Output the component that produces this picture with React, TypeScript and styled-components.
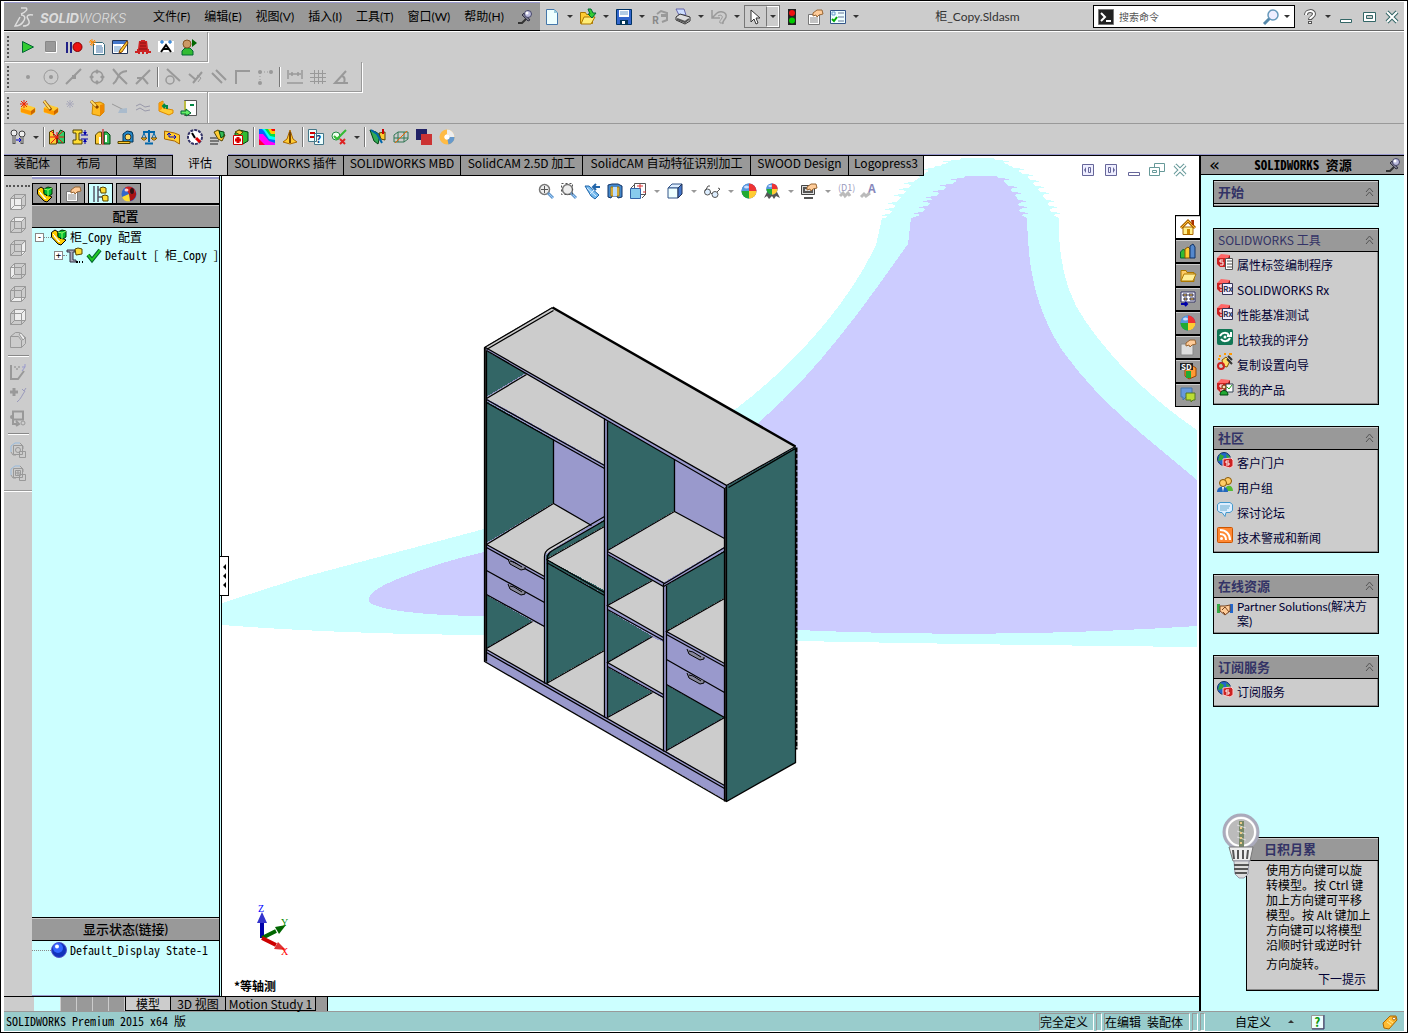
import React from "react";
import styled, { createGlobalStyle, css } from "styled-components";

const color = {
  face: "#cccccc",
  bar: "#999999",
  mint: "#ccffff",
  lilac: "#ccccff",
  slate: "#9999cc",
  teal: "#336666",
  status: "#99cccc",
  navy: "#333366",
};

const sans = `"Noto Sans CJK SC", "Open Sans", sans-serif`;
const humanist = `Lato, "Noto Sans CJK SC", sans-serif`;
const mono = `"Noto Sans Mono CJK SC", "Liberation Mono", "Noto Sans CJK SC", monospace`;

const GlobalStyle = createGlobalStyle`
  * { box-sizing: border-box; }
  body { margin: 0; background: #fff; font: 12px/16px ${sans}; color: #000; }
  button, input { font: inherit; color: inherit; margin: 0; }
  svg { display: block; flex: none; }
`;

/* ---------- icons ---------- */

const P = (d: string, fill = "none", stroke = "none", w = 1) => (
  <path d={d} fill={fill} stroke={stroke} strokeWidth={w} />
);

const assembly = (
  <>
    {P("M.5 3.500L4 1l3 2v4l3 3 1-1 4 2-5 5-3-1L.5 8z", "#fc0", "#000")}
    {P("M2 5l7 8M3 7l5 6", "none", "#fff")}
    {P("M7 3l4-2 4 1v6l-3 2-5-2z", "#0b3", "#030")}
    {P("M7 3l4 1 4-2M11 4v6", "none", "#9f6")}
  </>
);

const block = (
  <>
    {P("M1 8l4-3 10 3v4l-4 3-10-3z", "#fc3", "#fc3")}
    {P("M1 8l10 3v4l-10-3z", "#f90")}
    {P("M11 11l4-3v4l-4 3z", "#c60")}
  </>
);

const ball = (
  <>
    <circle cx="8" cy="8" r="7.500" fill="#36c" />
    {P("M8 8L8 .5A7.500 7.500 0 0 0 .5 8z", "#59d")}
    {P("M8 8L.5 8A7.500 7.500 0 0 0 8 15.500z", "#2a3")}
    {P("M8 8V15.500A7.500 7.500 0 0 0 15.500 8z", "#fc3")}
    {P("M8 8L15.500 8A7.500 7.500 0 0 0 8 .5z", "#e33")}
    <ellipse cx="5.500" cy="4" rx="2.500" ry="1.500" fill="#cdf" />
  </>
);

const darkBall = (
  <>
    <circle cx="8" cy="8" r="7.500" fill="#36c" />
    {P("M8 8L4 1.500A7.500 7.500 0 0 1 15 6z", "#c22")}
    {P("M8 8L15 6A7.500 7.500 0 0 1 9 15z", "#a11")}
    {P("M8 8L9 15.500A7.500 7.500 0 0 1 1 11z", "#fd3")}
    <ellipse cx="11" cy="5" rx="2" ry="3" fill="#311" />
    <ellipse cx="5.500" cy="4" rx="2" ry="1.500" fill="#fcc" />
  </>
);

const redBox = (
  <>
    {P("M0 4l4-4 9 1-2 4z", "#f66")}
    {P("M0 4h11v9l-8 0-3-3z", "#c22")}
    {P("M11 4l2-3v10l-2 2z", "#911")}
    {P("M6 6H3v2h3v3H3", "none", "#fff")}
  </>
);

const globeBox = (
  <>
    <circle cx="7" cy="7" r="6.500" fill="#26c" stroke="#136" />
    {P("M3 2l4 2-2 4-4 1zM9 2l4 3-3 2z", "#3a3")}
    {P("M6 7l8-1 2 2v6l-3 2-7-2z", "#c22", "#fcc")}
    {P("M12 9H9v2h3v2H9", "none", "#fff")}
  </>
);

const lens = (extra: React.ReactNode) => (
  <>
    <circle cx="6.500" cy="6.500" r="5" fill="#eee" stroke="#777" strokeWidth="1.500" />
    {P("M10 10l5 5", "none", "#69c", 3)}
    {P("M11 11l4 4", "none", "#9cf")}
    {extra}
  </>
);

const hand = P("M6 4l4-3 5 0 1 4-4 1-2 2-1-2-3 1z", "#fc9", "#963");
const sheet = (
  <>
    {P("M1.500 5.500h11v10h-11z", "#fff", "#777")}
    {P("M3 9h8M3 11h8M3 13h8", "none", "#888")}
  </>
);

const wire = (front: React.ReactNode) => (
  <>
    {front}
    {P("M.5 4.500h11v11h-11zM4.500.5h11v11h-11zM.5 4.500l4-4M11.500 4.500l4-4M11.500 15.500l4-4M.5 15.500l4-4", "none", "#999")}
  </>
);

const stack = (inner: React.ReactNode) => (
  <>
    {P("M1 10V4l4-3h5", "none", "#9bd")}
    {P("M1 10l2 3h3M10 1l3 3v3", "none", "#999")}
    {P("M3.500 3.500h9v9h-9zM9.500 9.500h6v6h-6z", "none", "#999")}
    {inner}
  </>
);

const glyphs: Record<string, React.ReactNode> = {
  play: P("M2.500 2.500v11l11-5.500z", "#3c3", "#063"),
  stop: <>{P("M2.500 2.500h11v11h-11z", "#aaa", "#fff")}{P("M2.500 2.500h10v10h-10z", "#999", "#888")}</>,
  record: <>{P("M0 3h2v11H0zM4 3h2v11H4z", "#228")}<circle cx="11.500" cy="8" r="4.500" fill="#e11" stroke="#800" /></>,
  newMacro: <>{P("M4.500 3.500h9l2 2v10h-11z", "#fff", "#367")}{P("M7 7h6M7 9h7M7 11h7M7 13h7", "none", "#47a")}{P("M3 0v7M0 3h7M1 1l5 5M6 1L1 6", "none", "#f80")}</>,
  editMacro: <>{P("M.5 1.500h15v13H.5z", "#fff", "#235")}{P("M1 2h14v3H1z", "#47c")}{P("M2 8h7M2 10h7M2 12h6", "none", "#69c")}{P("M15 2l-7 9-1 3 3-1 6-9z", "#fc3", "#840")}</>,
  stamp: <>{P("M6 1h4v1h2l1 8h1v2h2v2h-3v1h-2v-2H9v2H7v-2H5v2H3v-1H0v-2h2v-2h1l1-8h2z", "#c22")}{P("M5 4h6M5 7h6M4 10h8", "none", "#811")}</>,
  letterA: <>{P("M0 2h16v11H0z", "#fff")}{P("M3 13l5-7 5 7M5 10h6", "none", "#000", 2)}{P("M2 3h4M4 1v4M10 3h4M12 1v4", "none", "#06c")}</>,
  person: <>{P("M1 16v-4l3-3h5l3 3v4z", "#3b3", "#063")}<circle cx="6" cy="5" r="4" fill="#c96" stroke="#852" />{P("M11 0v8l5-4z", "#060")}</>,
  point: <circle cx="8" cy="8" r="2" fill="#999" />,
  circleCenter: <><circle cx="8" cy="8" r="7" fill="none" stroke="#999" /><circle cx="8" cy="8" r="2" fill="#999" /></>,
  lineMid: <>{P("M0 15L15 0", "none", "#999", 2)}{P("M6 6h4v4H6z", "#999")}</>,
  quadrant: <><circle cx="8" cy="8" r="6" fill="none" stroke="#999" strokeWidth="1.500" />{P("M8 0l2 3-2 2-2-2zM8 16l2-3-2-2-2 2zM0 8l3-2 2 2-2 2zM16 8l-3-2-2 2 2 2z", "#999")}</>,
  cross: <>{P("M1 0l5 6 9 9", "none", "#999", 2)}{P("M1 15C8 10 4 3 15 2", "none", "#999", 2)}</>,
  nearest: <>{P("M1 15L15 1", "none", "#999", 2)}{P("M2 9h6l5 6", "none", "#999", 2)}</>,
  tangent: <><circle cx="5" cy="11" r="4" fill="none" stroke="#999" strokeWidth="1.500" />{P("M2 0l13 12", "none", "#999", 2)}</>,
  perp: <>{P("M5 14L14 3M1 5l7 6", "none", "#999", 2)}{P("M9 6l4 3-3 4", "none", "#999")}</>,
  parallel: P("M1 4l10 10M5 1l10 10", "none", "#999", 2),
  corner: P("M2 15V2h14", "none", "#999", 2),
  dottedCorner: <><path d="M3 14V3h12" fill="none" stroke="#999" strokeDasharray="1 2" /><circle cx="3" cy="3" r="2" fill="#999" /><circle cx="14" cy="3" r="2" fill="#999" /><circle cx="3" cy="14" r="2" fill="#999" /></>,
  dimension: P("M1 1v9M15 1v9M2 5h12M5 3v4M11 3v4M0 14h16", "none", "#999", 1.5),
  mesh: P("M0 4.500h16M0 8.500h16M0 12.500h16M4.500 1v14M8.500 1v14M12.500 1v14", "none", "#999"),
  angle: P("M13 2L2 14h13M9 7c3 1 3 4 2 7", "none", "#999", 2),
  newPart: <>{block}{P("M4 0v8M0 4h8M1 1l6 6M7 1L1 7", "none", "#e20")}</>,
  editPart: <>{block}{P("M1 1l7 9", "none", "#840", 3)}{P("M1 1l6 8", "none", "#fd6", 2)}</>,
  sparkle: P("M4 0v8M0 4h8M1 1l6 6M7 1L1 7", "none", "#aab"),
  foldPart: <>{P("M4 3l7-1 4 2v8l-4 4-8-2z", "#fb2", "#c80")}{P("M11 5l4-1v8l-4 4z", "#e80")}{P("M2 1l7 7", "none", "#840", 3)}{P("M2 1l5 5", "none", "#fd6", 2)}</>,
  ghostLine: <>{P("M0 4l12 6", "none", "#999")}{P("M8 9l7-1v5H6z", "#abc")}</>,
  ghostPair: <>{P("M1 6l4-2 5 3 5-1M1 10l4-2 5 3 5-1", "none", "#99a")}</>,
  bracket: <>{P("M1 3l4-2v7l10 2v3l-4 2-10-4z", "#fc3", "#d80")}{P("M1 4v7l3-2V2z", "#f90")}{P("M9 9V6H6M7 4L5 6l2 2", "none", "#084", 2)}</>,
  exitSheet: <>{P("M3.500.5h12v15h-12z", "#fff", "#555")}{P("M3 1h2v14H3z", "#bb4")}{P("M9 4h4v2H9z", "#084")}{P("M0 11h5V9l5 4-5 3v-2H0z", "#6e6", "#063")}</>,
  bolts: <><circle cx="4" cy="4" r="3" fill="#eee" stroke="#444" /><circle cx="12" cy="5" r="3" fill="#eee" stroke="#444" />{P("M4 7v8M12 8v7", "none", "#555", 3)}{P("M4 7v7M12 8v6", "none", "#ccc")}{P("M6 11h5M9 9l2 2-2 2", "none", "#00c")}</>,
  interference: <>{P("M.5 3l4-2v5l3 3v6h-7z", "#fc3", "#540")}{P("M15.500 3l-4-2-3 5v8h7z", "#3c6", "#041")}{P("M2 2l12 12M14 2L2 14M8 3v11M1 8h14", "none", "#e11")}</>,
  clearance: <>{P("M1 1h9v3H7v7h3v4H1v-4h3V4H1z", "#fd3", "#540")}{P("M9 6h7M9 10h7M13 1v5M13 15v-5", "none", "#00a")}{P("M11 3h4l-2 3zM11 13h4l-2-3z", "#00a")}</>,
  holeAlign: <>{P("M.5 6l3-3h3v12h-6z", "#fc3", "#540")}{P("M9 3h3l3 3v9H9z", "#3b5", "#041")}{P("M8 0v16", "none", "#c00")}{P("M4 8h2v7H4zM10 6h2v7h-2z", "#fff")}</>,
  measure: <>{P("M5 5l4-3 5 1 1 3v7H5z", "#28c", "#035")}<circle cx="10" cy="8" r="3" fill="#fd6" stroke="#333" />{P("M0 12.500h12v2H0z", "#fc3", "#540")}</>,
  scales: <>{P("M8 1v12M2 3h12M4 14.500h8", "none", "#06a", 2)}{P("M3 4l-2 5h4zM13 4l-2 5h4z", "none", "#06a")}{P("M0 9h6l-2 2H2zM10 9h6l-2 2h-2z", "#fc3", "#850")}</>,
  section: <>{P("M.5 2l10 2 5 2v9l-5-3-10-2z", "#fc3", "#a60")}{P("M5 4v4h7M10 6l2 2-2 2M3 6l2-2 2 2", "none", "#00c")}</>,
  gauge: <><circle cx="8" cy="8" r="7" fill="#fff" stroke="#336" strokeWidth="2" strokeDasharray="3 1" />{P("M9 9l4 4", "none", "#d00", 3)}{P("M8 9L5 4", "none", "#000", 2)}</>,
  assemblyStats: <>{P("M4 3l4-2 7 5-3 6-4-2z", "#fc3", "#540")}{P("M9 2l5 1v4l-3 2z", "#3b5", "#041")}{P("M0 9h7M0 12h9M0 15h8", "none", "#777", 2)}</>,
  assemblyCare: <>{P("M2 4l4-3 9 2v9l-5 3-8-3z", "#3b3", "#041")}{P("M2 3l4-2 4 2-3 3z", "#fc3", "#540")}{P("M.5 6.500h9v9h-9z", "#fff", "#c00")}{P("M5 8v6M2 11h6", "none", "#d00", 3)}</>,
  rainbow: <>{P("M0 0h16v16H0z", "#f0f")}{P("M0 0h16v14L10 12 4 5H0z", "#06f")}{P("M3 0h13v11l-6-1L5 2z", "#0ff")}{P("M6 0h10v8l-5-1z", "#0d4")}{P("M9 0h7v5l-4 0z", "#fc0")}{P("M12 0h4v2h-3z", "#f00")}{P("M0 10l6 6H0z", "#f03")}</>,
  draft: <>{P("M8 1l3 9 4 3-7 2-7-2 4-3z", "#fc3", "#a60")}{P("M8 3v11", "none", "#740", 2)}</>,
  compareDocs: <>{P("M.5.5h8v12h-8zM6.500 4.500h9v11h-9z", "#eff", "#478")}{P("M2 4h5M2 8h4", "none", "#c00", 2)}<text x="8" y="14" fontSize="10" fontWeight="700" fill="#048">?</text></>,
  checkActive: <><circle cx="5" cy="7" r="4" fill="#efe" stroke="#284" />{P("M3 7l3 3 9-9", "none", "#3b3", 2)}{P("M9 10l5 5M14 10l-5 5", "none", "#d22", 2)}</>,
  costing: <>{P("M0 1l6 2 4 3-2 9-4-3z", "#3a5", "#041")}{P("M9 4l6-1v8l-4-1z", "#fc3", "#540")}{P("M1 1l6 4 5 9", "none", "#06a", 2)}{P("M13 0v5", "none", "#c00", 2)}</>,
  cage: <>{P("M1 6l4-3 10 0v7l-4 3H1zM5 3v10M11 3v10M1 9h14", "none", "#375")}{P("M2 14L14 2", "none", "#e60")}</>,
  squares: <>{P("M0 0h11v11H0z", "#226")}{P("M5 5h11v11H5z", "#c33")}</>,
  donut: <><circle cx="8" cy="8" r="5" fill="#fff" stroke="#fb4" strokeWidth="5" />{P("M8 3A5 5 0 0 1 13 8", "none", "#eee", 5)}{P("M13 8A5 5 0 0 1 9 13", "none", "#69c", 5)}<circle cx="8" cy="8" r="2.500" fill="#fff" /></>,
  pin: <>{P("M0 14h4l4-4", "none", "#333", 2)}{P("M4 6l6 6 2-1-6-7z", "#778", "#334")}<circle cx="10" cy="5" r="3.500" fill="#bbd" stroke="#446" /><circle cx="9" cy="4" r="1.500" fill="#fff" /></>,
  newDoc: <>{P("M2.500.5h8l3 3v12h-11z", "#eff", "#47a")}{P("M10 0v4h4z", "#9cd")}</>,
  open: <>{P("M.5 3.500h5l1 2h6v9H.5z", "#fc3", "#a70")}{P("M4 8h11l-4 7H1z", "#fe7", "#a70")}{P("M8 0h3l2 4h3l-4 5-4-4h2z", "#3c3", "#063")}</>,
  save: <>{P("M.5.5h15v15H.5z", "#36c", "#036")}{P("M3 1h10v7H3z", "#fff")}{P("M4 3h8M4 5h8", "none", "#69c")}{P("M4 11h8v5H4z", "#035")}{P("M6 12h3v3H6z", "#fff")}</>,
  rebuild: <>{P("M5 5l4-3 6 2v7l-5 2", "none", "#999", 2)}{P("M9 5h6v3H9z", "#999")}<text x="0" y="15" fontSize="10" fontWeight="700" fill="#888">R</text></>,
  print: <>{P("M1 0h8l2 6H4z", "#cdf", "#66a")}{P("M1 8l4-3 10 3v4l-5 3-9-4z", "#ddd", "#333")}{P("M2 10l8 3 4-3", "none", "#555", 2)}</>,
  undo: <>{P("M1 1v8h8M1 9l5-5", "none", "#999", 1.5)}{P("M6 4c5-3 10 0 9 4-1 3-4 4-3 7", "none", "#999", 1.5)}{P("M7 7c3-2 5 0 4 2-1 2-3 3-2 5h3", "none", "#999")}</>,
  pointer: P("M3 1v12l3-3 2 5 2-1-2-5h4z", "#fff", "#333"),
  traffic: <>{P("M4 0h8v16H4z", "#222")}<circle cx="8" cy="4" r="3" fill="#e11" /><circle cx="8" cy="11.500" r="3" fill="#0c0" /></>,
  props: <>{sheet}{hand}</>,
  options: <>{P("M.5 1.500h15v13H.5z", "#eff", "#358")}{P("M8 4h6M8 8h6M8 12h6", "none", "#679")}{P("M2 3h3v3H2z", "none", "#69c")}{P("M2 10l2 2 3-4", "none", "#0a0", 2)}</>,
  help: <>{P("M4 6c0-5 8-5 8-1 0 3-4 3-4 6M8 12v3", "none", "#555", 4)}{P("M4 6c0-5 8-5 8-1 0 3-4 3-4 5M8 13v1", "none", "#fff", 2)}</>,
  min: P("M2.500 10.500h11v3h-11z", "#fff", "#366"),
  max: <>{P("M2.500 3.500h12v9h-12z", "#fff", "#366")}{P("M5.500 6.500h6v3h-6z", "#ccc", "#366")}</>,
  close: <>{P("M3 3l10 10M13 3L3 13", "none", "#366", 4)}{P("M3 3l10 10M13 3L3 13", "none", "#fff", 2)}</>,
  restore: <>{P("M5.500 1.500h10v8h-10z", "#fff", "#699")}{P("M.5 5.500h10v8H.5z", "#fff", "#699")}{P("M3.500 8.500h4v2h-4z", "none", "#699")}</>,
  closeDoc: <>{P("M3 3l10 10M13 3L3 13", "none", "#699", 4)}{P("M3 3l10 10M13 3L3 13", "none", "#fff", 2)}</>,
  minDoc: P("M2.500 10.500h11v3h-11z", "#fff", "#669"),
  paneLeft: <>{P("M2.500 2.500h11v11h-11z", "#eef", "#669")}{P("M8.500 5.500h2v5h-2z", "none", "#669")}{P("M6 5v6L4 8z", "#669")}</>,
  paneRight: <>{P("M2.500 2.500h11v11h-11z", "#eef", "#669")}{P("M5.500 5.500h2v5h-2z", "none", "#669")}{P("M10 5v6l2-3z", "#669")}</>,
  command: <>{P("M.5.5h15v15H.5z", "#222", "#777")}{P("M3 4l4 4-4 4M8 12h5", "none", "#fff", 2)}</>,
  search: <>{P("M1 15l6-6", "none", "#58a", 3)}<circle cx="10" cy="6" r="5" fill="#eef" stroke="#69b" strokeWidth="1.500" /></>,
  zoomFit: lens(P("M6.500 3v7M3 6.500h7", "none", "#555")),
  zoomArea: lens(<path d="M.5.5h11v11H.5z" fill="none" stroke="#555" strokeDasharray="2 2" />),
  prevView: <>{P("M1 3l4 0 10 9-4 4-4-3z", "#7be", "#26a")}{P("M3 5l9 8M6 11l4-4", "none", "#def")}{P("M9 4h7M12 1L9 4l3 3", "none", "#26a", 2)}</>,
  sectionView: <>{P("M1 2l4-1 6 0 4 2v11l-4 1-1-2H5l-1 2-3-1z", "#48c", "#136")}{P("M4 4h2v9H4zM10 4h2v9h-2z", "#fd6", "#a70")}{P("M6 4h4v9H6z", "#bdf")}</>,
  orient: <>{P("M4.500.5h11v11h-11zM1 5l4-4M12 15l4-4", "#fff", "#555")}{P("M.5 5.500h10v10H.5z", "#8ce", "#36a")}{P("M10 1v5M7 3h6M13 9h3", "none", "#d33")}</>,
  shaded: <>{P("M1 5l4-4h10l-4 4z", "#def", "#358")}{P("M1 5h10v10H1z", "#eff", "#358")}{P("M11 5l4-4v10l-4 4z", "#47c", "#235")}</>,
  glasses: <><circle cx="3.500" cy="9" r="3" fill="#def" stroke="#555" /><circle cx="11" cy="11.500" r="3" fill="#def" stroke="#555" />{P("M1 8L4 3h2M13 9l3-3-2-1M6 9l2 2", "none", "#555")}</>,
  ball,
  darkBall,
  scene: <>{P("M0 15l3-6h10l3 6-4-2-2 3-2-3-3 3-2-3z", "#555")}<g transform="translate(2 0) scale(.75)">{ball}</g></>,
  display: <>{P("M.5 2.500h13v9H.5z", "#ddd", "#444")}{P("M3 5h8v4H3zM3 15h9", "none", "#555", 2)}{hand}</>,
  dimHide: <><text x="0" y="8" fontSize="9" fill="#99b">(D1)</text>{P("M2 13l3-3 2 3 3-3 2 3", "none", "#bbb", 3)}</>,
  textHide: <><text x="7" y="10" fontSize="12" fontWeight="700" fill="#88b">A</text>{P("M0 14l3-3 2 2 4-3", "none", "#bbb", 3)}</>,
  assembly,
  config: <>{P("M1 0v16M5 0v16M5 4h4M5 11h5", "none", "#556", 1.5)}{P("M7 2l3-1 3 1v5H8zM9 10l3-1 3 1v5h-5z", "#fd3", "#540")}</>,
  configItem: <>{P("M0 3h8v2H6v8h3v2H3V5H0z", "#aab", "#334")}{P("M8 2l3-1 4 1v5l-6 1z", "#fd3", "#540")}{P("M9 14h2v2H9zM12 14h1v2h-1zM15 14h1v2h-1z", "#000")}</>,
  check: <>{P("M2 8l4 5L14 3", "none", "#063", 4)}{P("M2 8l4 5L14 3", "none", "#2c2", 2)}</>,
  sphere: <><circle cx="8" cy="8" r="7.500" fill="#13b" stroke="#55c" /><circle cx="7" cy="6" r="5" fill="#36f" /><circle cx="6" cy="4.500" r="2" fill="#fff" /></>,
  cubeFront: wire(P("M1 5h11v11H1z", "#eee")),
  cubeTop: wire(P("M1 5l4-4h10l-4 4z", "#eee")),
  cubeRight: wire(P("M12 5l4-4v11l-4 4z", "#eee")),
  cubeLeft: wire(P("M1 5l4-4v11l-4 4z", "#eee")),
  cubeBottom: wire(P("M1 15l4-4h10l-4 4z", "#eee")),
  cubeBack: wire(P("M5 1h11v11H5z", "#eee")),
  cubeIso: <>{P("M.5 4.500l5-4h4l6 5v6l-4 4H.5zM.5 4.500h8l3 4v7M11.500 8.500l4-3", "none", "#999")}{P("M9 2l2-1 4 5-2 2z", "#eee", "#999")}</>,
  sketchPlane: <>{P("M1 1v14h7l6-8", "none", "#999", 2)}{P("M4 2h2v2H4zM8 2h2v2H8zM6 4h2v2H6z", "#aaa")}{P("M15 3l-3 4M12 3h3M15 0v3", "none", "#99c")}</>,
  addSketch: <>{P("M4 1v8M0 5h8", "none", "#999", 3)}{P("M7 15c4-3 5-7 8-11M12 2l2 2 2-3", "none", "#99b")}</>,
  convert: <>{P("M3 1.500h10v8H3zM3 8v6h4M6 11l3 3-3 2", "none", "#999", 2)}<circle cx="13" cy="13" r="2" fill="none" stroke="#999" /><circle cx="2" cy="7" r="2" fill="#999" /></>,
  stackA: stack(<circle cx="8" cy="8" r="2.500" fill="none" stroke="#999" />),
  stackB: stack(P("M8 5v6M5 8h6M5.500 5.500h5v5h-5z", "none", "#999")),
  home: <>{P("M3 8h10v7.500H3z", "#fe8", "#a60")}{P("M1 9l7-7 7 7", "none", "#a60", 3)}{P("M1 9l7-7 7 7", "none", "#fb3")}{P("M7 10h3v5H7z", "#c80")}{P("M11 1h3v5h-2z", "#a30")}</>,
  library: <>{P("M.5 9l3-3 2 2v7h-5z", "#3b3", "#063")}{P("M5 6l3-2 2 2v9H5z", "#fc3", "#850")}{P("M10 3l3-2 2 3v11h-5z", "#58c", "#136")}</>,
  folder: <>{P("M1 3.500h5l1 2h7v9H1z", "#fc6", "#a70")}{P("M4 7h12l-3 7H1z", "#fe9", "#a70")}</>,
  palette: <>{P("M1 1h14v10H1z", "#fff", "#336")}{P("M3 3h4v2H3zM9 3h4v2H9zM4 7h3v2H4zM10 7h4v2h-4z", "#fc3", "#336")}{P("M1 13h6M5 11l2 2-2 2", "none", "#00a", 2)}</>,
  handSheet: <>{P("M1 5h12v11H1z", "#ddd", "#888")}{hand}</>,
  sd: <>{P("M5 6l8-3 3 2v8l-7 3-4-3z", "#f93", "#940")}{P("M6 8h5v7H6z", "#2a3")}{P("M0 0h13v7H0z", "#222")}<text x="1" y="7" fontSize="8" fontWeight="700" fill="#fff">SD</text></>,
  chat: <>{P("M1 1h11v9H6l-3 3v-3H1z", "#69d", "#47a")}{P("M6 6h9v7h-2l-2 2v-2H6z", "#bd3", "#572")}</>,
  propTab: <>{redBox}{P("M8.500 4.500h7v11h-7z", "#fff", "#555")}{P("M10 7h5M10 10h5M10 13h5", "none", "#555")}</>,
  rx: <>{redBox}{P("M5.500 4.500h10v11h-10z", "#eef", "#335")}<text x="6" y="13" fontSize="8" fontWeight="700" fill="#335">Rx</text></>,
  compare: <><rect width="16" height="16" rx="2" fill="#175" />{P("M3 7c2-4 7-4 9-1M13 9c-2 4-7 4-9 1M10 7h4V3", "none", "#fff", 2)}<circle cx="8" cy="8" r="1.500" fill="#fff" /></>,
  wizard: <>{P("M5 6l4-3 4 4-3 6-4-1z", "#fd6", "#850")}<circle cx="4" cy="12" r="3" fill="none" stroke="#c22" strokeWidth="2" />{P("M10 5l5 5M11 2l4 4", "none", "#333", 2)}{P("M2 2h2M7 0h2M1 5h2M12 0h3", "none", "#f90", 2)}</>,
  product: <>{redBox}{P("M9 5h7v8H9z", "#fff", "#345")}{P("M10 8l2 2 3-4", "none", "#2a2")}<circle cx="7" cy="8" r="2" fill="#fdb" stroke="#630" />{P("M3 16c0-6 8-6 8 0z", "#2a3", "#041")}</>,
  globeBox,
  users: <><circle cx="11" cy="4" r="3.500" fill="#fc6" stroke="#850" />{P("M8 14c0-7 8-7 8 0z", "#5b3")}<circle cx="6" cy="6" r="3.500" fill="#fc6" stroke="#850" />{P("M0 15c0-7 11-7 11 0z", "#26b")}{P("M5 10h2l-1 5z", "#fff")}</>,
  forum: <>{P("M3 .5h10l2.500 2v6l-2.500 2H9l-1 4-3-4H3L.5 8.500v-6z", "#def", "#49c")}{P("M3 4h10M3 6h9M3 8h7", "none", "#6ac")}</>,
  rss: <><rect x=".5" y=".5" width="15" height="15" rx="1" fill="#f83" stroke="#c50" /><circle cx="4.500" cy="11.500" r="1.500" fill="#fff" />{P("M3 7c4 0 6 2 6 6M3 3c6 0 10 4 10 10", "none", "#fff", 2)}</>,
  shake: <>{P("M0 3h3v9H0z", "#3a4")}{P("M13 3h3v9h-3z", "#26c")}{P("M3 5l5 0 5-1v6l-5 4-5-4z", "#fc9", "#742")}{P("M5 9l3-3 4 5M6 11l2 2", "none", "#742")}</>,
  helpBox: <>{P("M1.500 1.500h12v13h-12z", "#eff", "#999")}{P("M14 1v14H2", "none", "#336")}<text x="4" y="13" fontSize="13" fontWeight="900" fill="#191">?</text></>,
  tag: <>{P("M1 9l7-7 6 0 1 4-8 9-5-1z", "#fb3", "#a60")}<circle cx="12" cy="4.500" r="1.500" fill="#fff" stroke="#a60" />{P("M5 8l4 3M7 6l4 3", "none", "#fe9")}</>,
};

const Icon = ({ name }: { name: string }) => (
  <svg width="16" height="16" viewBox="0 0 16 16" overflow="visible" aria-hidden="true">
    {glyphs[name]}
  </svg>
);

/* ---------- shared controls ---------- */

const PlainButton = styled.button`
  display: flex;
  align-items: center;
  justify-content: center;
  flex: none;
  padding: 0;
  border: 0;
  background: none;
`;

const CaretButton = styled(PlainButton)<{ $soft?: boolean }>`
  width: ${(p) => (p.$soft ? 7 : 6)}px;
`;

const Caret = styled.span<{ $soft?: boolean }>`
  width: 6px;
  border: 3px solid transparent;
  border-top-color: ${(p) => (p.$soft ? "#999" : "#333")};
  border-bottom-width: 0;
`;

const Divider = styled.span<{ $tight?: boolean }>`
  width: 2px;
  height: 20px;
  margin: 0 ${(p) => (p.$tight ? "-3px" : "-1px")};
  border-left: 1px solid #777;
  border-right: 1px solid #fff;
`;

const Grip = styled.span<{ $flat?: boolean }>`
  flex: none;
  ${(p) =>
    p.$flat
      ? css`width: 24px; height: 2px; border-top: 2px dotted #555;`
      : css`width: 2px; height: 22px; border-left: 2px dotted #555;`}
`;

const Tools = styled.div`
  display: flex;
  align-items: center;
  gap: 7px;
`;

const ToolSet = ({ items, soft }: { items: string; soft?: boolean }) => (
  <Tools role="toolbar">
    {items.split(" ").map((item, i) => {
      if (item === "v") return <CaretButton key={i} $soft={soft} aria-label="more"><Caret $soft={soft} /></CaretButton>;
      if (item === "|") return <Divider key={i} />;
      if (item === "!") return <Divider key={i} $tight />;
      return <PlainButton key={i} aria-label={item}><Icon name={item} /></PlainButton>;
    })}
  </Tools>
);

/* ---------- window frame and title ---------- */

const Frame = styled.div`
  display: flex;
  flex-direction: column;
  min-height: 100vh;
  padding: 1px 3px;
  border: 1px solid #000;
  background: #fff;
`;

const TitleBar = styled.header`
  display: flex;
  height: 30px;
  background: ${color.face};
  border-bottom: 1px solid #fff;
  box-shadow: inset 0 -1px #666;
`;

const MenuBlock = styled.div`
  display: flex;
  align-items: center;
  width: 536px;
  padding: 0 6px 0 10px;
  background: ${color.bar};
  border-top: 1px solid ${color.slate};
  border-bottom: 1px solid #000;
`;

const Logo = styled.div`
  display: flex;
  align-items: center;
  gap: 6px;
  width: 139px;
  padding-top: 3px;
  color: #ddd;
  font: italic 700 13px/16px Inter, sans-serif;
  span { font-weight: 300; }
`;

const Menu = styled.nav`
  display: flex;
  flex: 1;
  justify-content: space-between;
  padding-right: 14px;
  font-family: ${humanist};
`;

const QuickBar = styled.div`
  display: flex;
  align-items: center;
  gap: 7px;
  padding-left: 4px;
`;

const SelectTool = styled.div`
  display: flex;
  align-items: center;
  height: 23px;
  margin: 0 -3px;
  border: 1px solid #777;
  ${PlainButton} { height: 21px; width: 21px; }
  ${PlainButton} + ${PlainButton} { width: 13px; border: 1px solid #fff; border-left-color: #777; }
`;

const DocName = styled.h1`
  flex: 1;
  margin: 0;
  padding-top: 7px;
  padding-left: 3px;
  font: 12px/16px ${humanist};
  color: #333;
  text-align: center;
`;

const SearchBox = styled.form`
  display: flex;
  align-items: center;
  gap: 5px;
  width: 202px;
  height: 23px;
  margin: 3px 0 0;
  padding: 0 4px;
  border: 1px solid #000;
  background: #fff;
  input {
    flex: 1;
    min-width: 0;
    padding: 0;
    border: 0;
    background: none;
    font-size: 10px;
    &::placeholder { color: #555; opacity: 1; }
  }
`;

const WindowTools = styled.div`
  display: flex;
  align-items: center;
  padding: 0 4px 0 7px;
`;

/* ---------- toolbars ---------- */

const ToolRow = styled.div`
  background: ${color.face};
`;

const ToolStrip = styled.div<{ $width: number }>`
  display: flex;
  align-items: center;
  gap: 11px;
  width: ${(p) => p.$width}px;
  height: 30px;
  padding-left: 3px;
  border: solid #999;
  border-width: 0 1px 1px 0;
  box-shadow: 1px 1px #fff;
  &:last-child { height: 31px; border-bottom: 0; box-shadow: 1px 0 #fff; }
`;

const CommandRow = styled.div`
  display: flex;
  align-items: center;
  height: 33px;
  padding: 0 6px 5px;
  background: ${color.face};
  border-top: 1px solid #999;
  border-bottom: 1px solid #000;
  box-shadow: inset 0 -1px ${color.slate};
`;

const Body = styled.div`
  display: flex;
  flex: 1;
`;

const MainColumn = styled.main`
  position: relative;
  display: flex;
  flex: 1;
  flex-direction: column;
  min-width: 0;
`;

const Scene = styled.svg`
  position: absolute;
  inset: 0 2px 15px 218px;
  width: calc(100% - 220px);
  height: calc(100% - 15px);
`;

const CommandTabs = styled.div`
  position: relative;
  display: flex;
  height: 20px;
  width: max-content;
  background: #000;
`;

const CommandTab = styled.button<{ $active?: boolean; $w: number }>`
  width: ${(p) => p.$w}px;
  padding: 0 0 5px;
  border: 0;
  border-right: 1px solid #000;
  border-bottom: 1px solid #000;
  background: ${color.bar};
  font-size: 12px;
  line-height: 14px;
  white-space: nowrap;
  ${(p) => p.$active && css`background: ${color.face}; box-shadow: 0 -2px ${color.face};`}
`;

const Workspace = styled.div`
  position: relative;
  display: flex;
  flex: 1;
`;

const Sidebar = styled.aside`
  width: 28px;
  background: ${color.face};
`;

const SideTools = styled.div`
  display: flex;
  flex-direction: column;
  align-items: center;
  gap: 7px;
  padding: 9px 0 9px;
  border-bottom: 1px solid #999;
  box-shadow: 0 1px #fff;
`;

const SideRule = styled.span`
  width: 21px;
  height: 2px;
  border-top: 1px solid #888;
  border-bottom: 1px solid #fff;
`;

/* ---------- feature manager ---------- */

const Manager = styled.section`
  display: flex;
  flex-direction: column;
  width: 190px;
  background: ${color.mint};
  border-right: 3px double #000;
`;

const ManagerTabs = styled.div`
  display: flex;
  gap: 3px;
  height: 28px;
  padding-top: 6px;
  background: ${color.face};
  border-top: 1px solid #fff;
  box-shadow: inset 0 2px ${color.slate}, inset 0 -1px #000;
`;

const ManagerTab = styled(PlainButton)<{ $active?: boolean }>`
  width: 25px;
  height: 21px;
  background: ${(p) => (p.$active ? color.mint : color.bar)};
  border: 1px solid #000;
`;

const PaneTitle = styled.h2`
  height: 24px;
  margin: 0;
  border-top: 1px solid #000;
  border-bottom: 1px solid #000;
  background: ${color.bar};
  box-shadow: inset 0 1px ${color.face};
  font: 500 13px/22px ${humanist};
  text-align: center;
`;

const Tree = styled.ul<{ $grow?: boolean }>`
  flex: ${(p) => (p.$grow ? "1" : "none")};
  margin: 0;
  padding: 0 0 0 3px;
  list-style: none;
  font: 12px/18px ${mono};
  ul { margin: 0; padding: 0 0 0 19px; list-style: none; }
`;

const TreeRow = styled.div`
  display: flex;
  align-items: center;
  gap: 3px;
  height: 18px;
  white-space: nowrap;
`;

const Expander = styled.button`
  display: flex;
  flex: none;
  align-items: center;
  justify-content: center;
  width: 9px;
  height: 9px;
  padding: 0;
  border: 1px solid #888;
  background: #fff;
  font: 9px/7px "DejaVu Sans Mono", monospace;
`;

const Twig = styled.span<{ $w: number }>`
  flex: none;
  width: ${(p) => p.$w}px;
  margin: 0 -3px;
  border-top: 1px dotted #888;
`;

const StatePane = styled.div`
  height: 55px;
  border-bottom: 1px solid ${color.slate};
`;

const Splitter = styled.button`
  position: absolute;
  left: 215px;
  top: 380px;
  display: flex;
  flex-direction: column;
  align-items: center;
  justify-content: space-around;
  width: 10px;
  height: 40px;
  padding: 5px 0;
  border: 1px solid #000;
  background: #fff;
  span { border: 3px solid transparent; border-left-width: 0; border-right-color: #000; }
`;

/* ---------- viewport ---------- */

const Viewport = styled.section`
  position: relative;
  display: flex;
  flex: 1;
  justify-content: center;
  padding-top: 7px;
  padding-right: 6px;
`;

const ViewName = styled.p`
  position: absolute;
  left: 12px;
  bottom: 1px;
  margin: 0;
  font: 700 12px/18px ${sans};
`;

const DocTools = styled.div`
  position: absolute;
  top: 6px;
  right: 11px;
`;

const TaskTabs = styled.div`
  position: absolute;
  z-index: 1;
  top: 59px;
  right: -1px;
  display: flex;
  flex-direction: column;
`;

const TaskTab = styled(PlainButton)<{ $active?: boolean }>`
  width: 25px;
  height: 24px;
  border: 1px solid #000;
  border-right: 0;
  background: ${(p) => (p.$active ? "#fff" : color.bar)};
  box-shadow: inset 0 1px ${color.face};
`;

const SheetTabs = styled.div`
  display: flex;
  height: 15px;
  padding-left: 30px;
  border-top: 1px solid #000;
  background: linear-gradient(to right, ${color.face} 30px, ${color.mint} 30px);
`;

const SheetNav = styled(PlainButton)<{ $blank?: boolean }>`
  width: ${(p) => (p.$blank ? 27 : 16)}px;
  background: ${(p) => (p.$blank ? color.mint : color.bar)};
  border-right: 1px solid #ccc;
`;

const SheetTab = styled.button<{ $active?: boolean; $w: number }>`
  width: ${(p) => p.$w}px;
  padding: 0;
  border: 1px solid #000;
  border-top: 0;
  border-left-width: ${(p) => (p.$active ? 1 : 0)}px;
  background: ${(p) => (p.$active ? color.face : "#aaa")};
  font-size: 12px;
  line-height: 12px;
  white-space: nowrap;
`;

const SheetEnd = styled.span`
  width: 12px;
  border-right: 1px solid #000;
  background: ${color.bar};
`;

/* ---------- task pane ---------- */

const TaskPane = styled.aside`
  display: flex;
  flex-direction: column;
  width: 205px;
  border-left: 2px solid #000;
  background: ${color.mint};
`;

const TaskHeader = styled.header`
  display: flex;
  align-items: center;
  height: 19px;
  padding: 0 2px 0 8px;
  background: ${color.bar};
  border-bottom: 1px solid #000;
  h2 { flex: 1; margin: 0; font: 700 13px/18px ${mono}; text-align: center; }
`;

const Fold = styled(PlainButton)`
  font: 18px/16px "DejaVu Sans", sans-serif;
`;

const Cards = styled.div`
  display: flex;
  flex: 1;
  flex-direction: column;
  gap: 21px;
  padding: 5px 25px 5px 12px;
`;

const CardBox = styled.section`
  border: 1px solid #000;
  background: ${color.face};
  box-shadow: inset -1px -1px #888;
`;

const CardTitle = styled.h3`
  display: flex;
  align-items: center;
  justify-content: space-between;
  height: 23px;
  margin: 0;
  padding: 0 4px;
  border-bottom: 1px solid #000;
  background: ${color.bar};
  box-shadow: inset 0 1px ${color.face};
  color: ${color.navy};
  font: 700 13px/20px ${sans};
`;

const CardTitlePlain = styled(CardTitle)`
  font-weight: 400;
  font-size: 12px;
`;

const Links = styled.ul`
  margin: 0;
  padding: 0 3px 2px;
  list-style: none;
`;

const LinkRow = styled.a`
  display: flex;
  align-items: flex-start;
  gap: 4px;
  min-height: 25px;
  padding-top: 2px;
  color: #003;
  text-decoration: none;
  line-height: 21px;
`;

const WideLink = styled(LinkRow)`
  padding-top: 1px;
  min-height: 33px;
  line-height: 15px;
  font-family: ${humanist};
  svg { margin-top: 2px; }
`;

const Tip = styled.section`
  position: relative;
  align-self: flex-end;
  width: 133px;
  margin-top: auto;
  margin-bottom: 15px;
  border: 1px solid #000;
  background: ${color.face};
  box-shadow: inset -1px -1px #888;
  ${CardTitle} { padding-left: 17px; }
  p { margin: 1px 0 0 19px; line-height: 15px; font-size: 12px; white-space: nowrap; }
  p + p { margin-top: 4px; }
  a { display: block; margin: 0 12px 4px; color: #003; text-align: right; text-decoration: none; line-height: 15px; }
`;

const Bulb = styled.svg`
  position: absolute;
  left: -25px;
  top: -25px;
`;

/* ---------- status ---------- */

const StatusBar = styled.footer`
  display: flex;
  align-items: center;
  height: 20px;
  padding-left: 2px;
  border-top: 1px solid ${color.bar};
  background: ${color.status};
  font: 12px/16px ${mono};
`;

const StatusText = styled.span`
  flex: 1;
  padding-bottom: 1px;
`;

const StatusCell = styled.span<{ $w: number }>`
  width: ${(p) => p.$w}px;
  height: 18px;
  margin-right: 2px;
  border: 1px solid #999;
  border-right-color: #fff;
  border-bottom-color: #fff;
  white-space: nowrap;
  line-height: 15px;
`;

const StatusEnd = styled.div`
  display: flex;
  align-items: center;
  width: 197px;
  padding: 0 6px 0 28px;
  gap: 16px;
  ${PlainButton}:last-child { margin-left: auto; }
`;

const UpCaret = styled.span`
  display: inline-block;
  margin-left: 17px;
  border: 3px solid transparent;
  border-bottom-color: #333;
  border-top-width: 0;
`;

/* ---------- drawings ---------- */

const streaks = (left: number[][], right: number[][], tail: string) => {
  const ragged = (pts: number[][], dir: number) => {
    const out: string[] = [];
    for (let k = 0; k < pts.length - 1; k++) {
      const [x0, y0] = pts[k];
      const [x1, y1] = pts[k + 1];
      for (let y = y0; y < y1; y += 3) {
        const x = x0 + ((x1 - x0) * (y - y0)) / (y1 - y0);
        const spike = y % 2 ? 7 : -3;
        out.push(`${Math.round(x + dir * spike)} ${y}`, `${Math.round(x - dir * 2)} ${y + 2}`);
      }
    }
    return out;
  };
  const up = ragged(left, -1).reverse();
  return `M${up.join("L")}L${ragged(right, 1).join("L")}${tail}`;
};

const outerHill = streaks(
  [[958, 158], [932, 166], [912, 180], [895, 200], [886, 216]],
  [[997, 158], [1015, 166], [1032, 178], [1048, 198], [1056, 216]],
  "L1059 218C1058 246 1062 290 1086 322C1114 362 1150 398 1197 430V647Q1000 645 797 641L484 635Q340 634 222 625V603L300 578L484 529L737 408C800 360 850 300 876 245L882 218Z"
);

const innerHill = streaks(
  [[962, 176], [945, 185], [930, 198], [917, 216]],
  [[1000, 176], [1010, 184], [1020, 198], [1023, 216]],
  "L1027 218C1028 270 1036 310 1062 350C1100 404 1150 440 1197 480V626Q1000 639 797 630L484 616C440 616 384 612 370 603C364 595 380 586 400 578Q440 562 484 552L757 424C820 370 868 300 908 244L911 218Z"
);

const G = color.face;
const T = color.teal;
const V = color.slate;

const faces: [string, string][] = [
  ["M485 348L553 308L797 447V763L728 802L485 662Z", V],
  ["M485 348L553 308L797 447L728 486Z", G],
  ["M728 487L797 448V763L728 802Z", T],
  ["M487 352L527 374L487 398Z", T],
  ["M487 399L527 375L605 420V465Z", G],
  ["M487 402L554 440V504L487 544Z", T],
  ["M487 545L554 504L592 526L545 556V577Z", G],
  ["M487 596L533 622L487 649Z", T],
  ["M487 650L533 622L545 628V683Z", G],
  ["M547 556L605 521V595L547 563Z", T],
  ["M547 560L605 527V591Z", G],
  ["M547 564L605 595V651L547 684Z", T],
  ["M547 684L605 651V717Z", G],
  ["M608 422L675 460V512L608 551Z", T],
  ["M608 552L675 512L725 539V548L665 583Z", G],
  ["M608 556L653 581L608 606Z", T],
  ["M608 607L653 581L664 587V638Z", G],
  ["M608 611L653 637L608 663Z", T],
  ["M608 664L653 638L664 643V695Z", G],
  ["M608 668L653 693L608 718Z", T],
  ["M608 719L653 693L664 699V751Z", G],
  ["M667 587L725 552V599L667 632Z", T],
  ["M667 632L725 599V665Z", G],
  ["M667 686L725 718L667 751Z", T],
  ["M667 752L725 719V786Z", G],
];

const edges = [
  "M487 545L554 504V440M592 526L554 504",
  "M487 400L605 466M487 403L605 469M527 375L487 399",
  "M487 545L545 577M487 548L545 580M487 571L545 603M487 595L545 627",
  "M533 622L487 649M487 650L725 786M487 653L725 789",
  "M547 560L605 593M547 563L605 596M547 560L605 527M547 684L605 651",
  "M545 684V557Q545 552 550 549L605 517M548 684V557Q549 553 553 551L605 521",
  "M605 419V718M608 422V718",
  "M675 460V512L608 551M675 512L725 539",
  "M608 552L665 584L725 548M608 555L664 587L725 552",
  "M653 581L608 606L664 638M608 610L664 641",
  "M653 637L608 663L664 695M608 667L664 698",
  "M653 693L608 718M664 584V752M667 586V752",
  "M725 599L667 632L725 664M667 635L725 667M667 660L725 693M667 685L725 718L667 751",
  "M487 351L725 489V802M486 348L727 486V802",
  "M485 348L553 308M487 350L554 311M796 447L727 486",
  "M729 488L796 449V763L727 802L485 662V348M487 351V662",
];

const handle = (x: number, y: number) => (
  <path key={`${x}-${y}`} d={`M${x - 8} ${y - 6}l2 5l11 6l4 -1v-2M${x - 6} ${y - 4}l4 1l8 5`} fill="#889" stroke="#000" />
);

const ModelScene = () => (
  <Scene viewBox="222 156 975 840" preserveAspectRatio="xMinYMin slice" role="img" aria-label="柜">
    <path d={outerHill} fill={color.mint} shapeRendering="crispEdges" />
    <path d={innerHill} fill={color.lilac} shapeRendering="crispEdges" />
    <g transform="translate(-1 -1)">
      <g shapeRendering="crispEdges">
        {faces.map(([d, f]) => <path key={d} d={d} fill={f} />)}
        <path d="M486 348V662M727 488V802" stroke="#333" strokeWidth="2" />
      </g>
      <g transform="translate(.5 .5)" strokeWidth="1.300" fill="none" stroke="#000">
        {edges.map((d) => <path key={d} d={d} />)}
        <path d="M553 308L796 447" strokeWidth="2.500" />
        <path d="M797 448V750" strokeWidth="2" strokeDasharray="5 1" />
      </g>
      {[[517, 566], [517, 591], [696, 656], [696, 680]].map(([x, y]) => handle(x, y))}
    </g>
    <g strokeWidth="4">
      <path d="M262 938V920" stroke="#00a" />
      <path d="M262 912l5 11h-10z" fill="#33c" />
      <path d="M262 938l14-7" stroke="#060" />
      <path d="M286 925l-7 9-4-7z" fill="#060" />
      <path d="M262 938l14 7" stroke="#c00" />
      <path d="M286 950l-12-1 4-7z" fill="#d33" />
    </g>
    <g fontFamily="Liberation Serif, serif" fontSize="10">
      <text x="258" y="912" fill="#00f">Z</text>
      <text x="281" y="926" fill="#080">Y</text>
      <text x="281" y="955" fill="#f00">X</text>
    </g>
  </Scene>
);

const DoubleUp = () => (
  <svg width="9" height="10" viewBox="0 0 9 10" aria-hidden="true">
    <path d="M1 5l3.500-4L8 5M1 9l3.500-4L8 9" fill="none" stroke="#555" />
  </svg>
);

/* ---------- content ---------- */

const menus = [["文件", "F"], ["编辑", "E"], ["视图", "V"], ["插入", "I"], ["工具", "T"], ["窗口", "W"], ["帮助", "H"]];

const commandTabs: [string, number][] = [
  ["装配体", 57], ["布局", 56], ["草图", 56], ["评估", 55], ["SOLIDWORKS 插件", 116], ["SOLIDWORKS MBD", 117],
  ["SolidCAM 2.5D 加工", 122], ["SolidCAM 自动特征识别加工", 168], ["SWOOD Design", 98], ["Logopress3", 75],
];

type CardData = { title: string; latin?: boolean; wide?: boolean; links: [string, string][] };

const cards: CardData[] = [
  { title: "开始", links: [] },
  {
    title: "SOLIDWORKS 工具",
    latin: true,
    links: [
      ["propTab", "属性标签编制程序"], ["rx", "SOLIDWORKS Rx"], ["rx", "性能基准测试"],
      ["compare", "比较我的评分"], ["wizard", "复制设置向导"], ["product", "我的产品"],
    ],
  },
  { title: "社区", links: [["globeBox", "客户门户"], ["users", "用户组"], ["forum", "探讨论坛"], ["rss", "技术警戒和新闻"]] },
  { title: "在线资源", wide: true, links: [["shake", "Partner Solutions(解决方案)"]] },
  { title: "订阅服务", links: [["globeBox", "订阅服务"]] },
];

const Card = ({ title, latin, wide, links }: CardData) => {
  const Heading = latin ? CardTitlePlain : CardTitle;
  const Row = wide ? WideLink : LinkRow;
  return (
    <CardBox>
      <Heading>{title}<PlainButton aria-label={title}><DoubleUp /></PlainButton></Heading>
      <Links>
        {links.map(([icon, text]) => (
          <li key={text}><Row href="#"><Icon name={icon} /><span>{text}</span></Row></li>
        ))}
      </Links>
    </CardBox>
  );
};

export default function App() {
  return (
    <Frame>
      <GlobalStyle />
      <TitleBar>
        <MenuBlock>
          <Logo>
            <svg width="20" height="22" viewBox="0 0 20 22" fill="none" stroke="#ddd">
              <path d="M7 1h5c2 1 0 4-5 6M7 8c4 0 5 3 2 7-2 3-4 4-8 4l5-9M19 8c-5-1-7 1-5 4 2 3 2 7-5 7" strokeWidth="1.500" />
            </svg>
            <div>SOLID<span>WORKS</span></div>
          </Logo>
          <Menu>
            {menus.map(([name, key]) => <PlainButton key={key}>{name}({key})</PlainButton>)}
          </Menu>
          <PlainButton aria-label="pin"><Icon name="pin" /></PlainButton>
        </MenuBlock>
        <QuickBar>
          <ToolSet items="newDoc v open v save v rebuild print v undo v" />
          <SelectTool>
            <PlainButton aria-label="select"><Icon name="pointer" /></PlainButton>
            <PlainButton aria-label="more"><Caret /></PlainButton>
          </SelectTool>
          <ToolSet items="traffic props options v" />
        </QuickBar>
        <DocName>柜_Copy.Sldasm</DocName>
        <SearchBox>
          <Icon name="command" />
          <input aria-label="搜索命令" placeholder="搜索命令" />
          <Icon name="search" />
          <Caret />
        </SearchBox>
        <WindowTools><ToolSet items="help v min max close" /></WindowTools>
      </TitleBar>

      <ToolRow>
        <ToolStrip $width={204}><Grip /><ToolSet items="play stop record newMacro editMacro stamp letterA person" /></ToolStrip>
        <ToolStrip $width={358}>
          <Grip />
          <ToolSet items="point circleCenter lineMid quadrant cross nearest | tangent perp parallel corner dottedCorner | dimension mesh angle" />
        </ToolStrip>
        <ToolStrip $width={204}><Grip /><ToolSet items="newPart editPart sparkle foldPart ghostLine ghostPair bracket exitSheet" /></ToolStrip>
      </ToolRow>
      <CommandRow>
        <ToolSet items="bolts v ! interference clearance holeAlign measure scales section gauge assemblyStats assemblyCare ! rainbow draft ! compareDocs checkActive v ! costing cage squares donut" />
      </CommandRow>

      <Body>
        <MainColumn>
          <ModelScene />
          <CommandTabs role="tablist">
            {commandTabs.map(([name, w]) => (
              <CommandTab key={name} role="tab" $w={w} $active={name === "评估"}>{name}</CommandTab>
            ))}
          </CommandTabs>
          <Workspace>
            <Sidebar>
              <SideTools>
                <Grip $flat />
                {"cubeFront cubeTop cubeRight cubeLeft cubeBottom cubeBack cubeIso | sketchPlane addSketch convert | stackA stackB"
                  .split(" ")
                  .map((n, i) => (n === "|" ? <SideRule key={i} /> : <PlainButton key={i} aria-label={n}><Icon name={n} /></PlainButton>))}
              </SideTools>
            </Sidebar>
            <Manager>
              <ManagerTabs role="tablist">
                {["assembly", "props", "config", "darkBall"].map((n) => (
                  <ManagerTab key={n} role="tab" aria-label={n} $active={n === "config"}><Icon name={n} /></ManagerTab>
                ))}
              </ManagerTabs>
              <PaneTitle>配置</PaneTitle>
              <Tree $grow>
                <li>
                  <TreeRow><Expander>-</Expander><Twig $w={7} /><Icon name="assembly" />柜_Copy 配置</TreeRow>
                  <ul>
                    <li>
                      <TreeRow>
                        <Expander>+</Expander><Twig $w={4} /><Icon name="configItem" /><Icon name="check" />Default [ 柜_Copy ]
                      </TreeRow>
                    </li>
                  </ul>
                </li>
              </Tree>
              <PaneTitle>显示状态(链接)</PaneTitle>
              <StatePane>
                <Tree>
                  <li><TreeRow><Twig $w={19} /><Icon name="sphere" />Default_Display State-1</TreeRow></li>
                </Tree>
              </StatePane>
            </Manager>
            <Viewport>
              <div><ToolSet soft items="zoomFit zoomArea prevView sectionView orient v shaded v glasses v ball scene v display v dimHide textHide" /></div>
              <ViewName>*等轴测</ViewName>
            </Viewport>
            <Splitter aria-label="collapse"><span /><span /><span /></Splitter>
          </Workspace>
          <DocTools><ToolSet items="paneLeft paneRight minDoc restore closeDoc" /></DocTools>
          <TaskTabs role="tablist">
            {["home", "library", "folder", "palette", "ball", "handSheet", "sd", "chat"].map((n) => (
              <TaskTab key={n} role="tab" aria-label={n} $active={n === "home"}><Icon name={n} /></TaskTab>
            ))}
          </TaskTabs>
          <SheetTabs>
            <SheetNav $blank aria-label="sheets" />
            <SheetNav aria-label="first" /><SheetNav aria-label="previous" /><SheetNav aria-label="next" /><SheetNav aria-label="last" />
            <SheetTab $active $w={46}>模型</SheetTab>
            <SheetTab $w={55}>3D 视图</SheetTab>
            <SheetTab $w={90}>Motion Study 1</SheetTab>
            <SheetEnd />
          </SheetTabs>
        </MainColumn>

        <TaskPane>
          <TaskHeader>
            <Fold aria-label="fold">«</Fold>
            <h2>SOLIDWORKS 资源</h2>
            <PlainButton aria-label="pin"><Icon name="pin" /></PlainButton>
          </TaskHeader>
          <Cards>
            {cards.map((c) => <Card key={c.title} {...c} />)}
            <Tip>
              <Bulb width="40" height="68" viewBox="0 0 40 68">
                <circle cx="19" cy="19" r="17" fill="#ddd" stroke="#aab" strokeWidth="3" />
                <circle cx="19" cy="19" r="14" fill="#bbb" stroke="#fff" strokeWidth="2" />
                <path d="M17 8h5v26h-5z" fill="#786" />
                <path d="M15 12l9 3M15 18l9 3M15 24l9 3" stroke="#ddd" />
                <path d="M19 9v24" stroke="#ec8" strokeWidth="2" strokeDasharray="2 3" />
                <path d="M7 34h24l-3 14H11z" fill="#eee" stroke="#777" />
                <path d="M11 37l1 9M16 37v9M21 37v9M26 37l-1 9" stroke="#555" strokeWidth="2" />
                <path d="M12 48h15l-1 13-4 4h-5l-4-4z" fill="#ddd" stroke="#99a" />
                <path d="M12 52h15M12 56h14M13 60h12" stroke="#555" strokeWidth="2" />
              </Bulb>
              <CardTitle>日积月累</CardTitle>
              <p>使用方向键可以旋<br />转模型。按 Ctrl 键<br />加上方向键可平移<br />模型。按 Alt 键加上<br />方向键可以将模型<br />沿顺时针或逆时针</p>
              <p>方向旋转。</p>
              <a href="#">下一提示</a>
            </Tip>
          </Cards>
        </TaskPane>
      </Body>

      <StatusBar>
        <StatusText>SOLIDWORKS Premium 2015 x64 版</StatusText>
        <StatusCell $w={55}>完全定义</StatusCell>
        <StatusCell $w={6} />
        <StatusCell $w={86}>在编辑 装配体</StatusCell>
        <StatusCell $w={6} />
        <StatusCell $w={5} />
        <StatusEnd>
          <PlainButton>自定义<UpCaret /></PlainButton>
          <PlainButton aria-label="help"><Icon name="helpBox" /></PlainButton>
          <PlainButton aria-label="tag"><Icon name="tag" /></PlainButton>
        </StatusEnd>
      </StatusBar>
    </Frame>
  );
}
